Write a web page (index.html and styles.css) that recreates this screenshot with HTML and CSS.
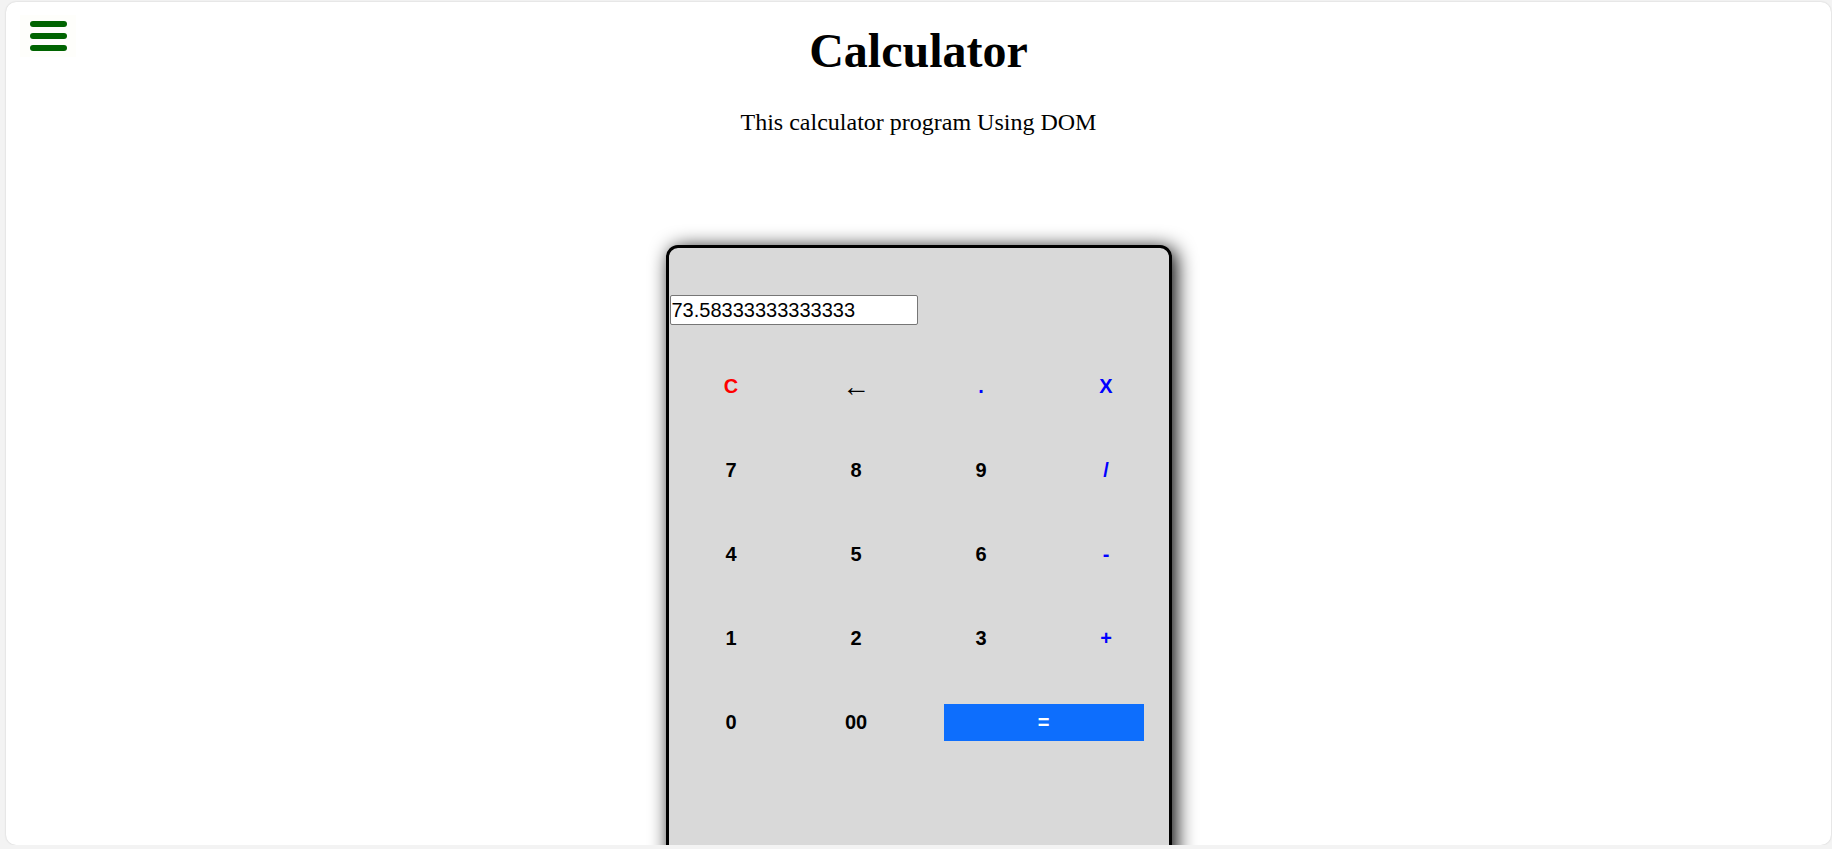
FILE: index.html
```html
<!DOCTYPE html>
<html lang="en">
<head>
<meta charset="utf-8">
<title>Calculator</title>
<link rel="stylesheet" href="styles.css">
</head>
<body>
<div class="panel">
  <button class="menu" aria-label="menu">
    <svg width="37" height="30" viewBox="0 0 37 30">
      <line x1="3" y1="3" x2="34" y2="3" />
      <line x1="3" y1="15" x2="34" y2="15" />
      <line x1="3" y1="27" x2="34" y2="27" />
    </svg>
  </button>
  <h1 class="title">Calculator</h1>
  <p class="subtitle">This calculator program Using DOM</p>
  <div class="calc">
    <input class="display" type="text" value="73.58333333333333">
    <div class="keys">
      <button class="key clear">C</button>
      <button class="key back">&larr;</button>
      <button class="key op">.</button>
      <button class="key op">X</button>
      <button class="key">7</button>
      <button class="key">8</button>
      <button class="key">9</button>
      <button class="key op">/</button>
      <button class="key">4</button>
      <button class="key">5</button>
      <button class="key">6</button>
      <button class="key op">-</button>
      <button class="key">1</button>
      <button class="key">2</button>
      <button class="key">3</button>
      <button class="key op">+</button>
      <button class="key">0</button>
      <button class="key">00</button>
      <button class="key equals">=</button>
    </div>
  </div>
</div>
</body>
</html>
```

FILE: styles.css
```css
html, body {
  margin: 0;
  padding: 0;
}

body {
  background: #f3f3f3;
  font-family: "Liberation Serif", "Times New Roman", serif;
}

.panel {
  position: relative;
  box-sizing: border-box;
  width: 1825px;
  height: 843px;
  margin: 2px 0 0 6px;
  background: #ffffff;
  border-radius: 10px;
  box-shadow: 0 0 2px rgba(0, 0, 0, 0.18);
  overflow: hidden;
  display: flex;
  flex-direction: column;
  align-items: center;
}

.menu {
  position: absolute;
  left: 14px;
  top: 13px;
  width: 56px;
  height: 42px;
  padding: 0;
  border: none;
  background: #fefefb;
  display: flex;
  align-items: center;
  justify-content: center;
  cursor: pointer;
}

.menu svg line {
  stroke: #006400;
  stroke-width: 6;
  stroke-linecap: round;
}

.title {
  margin: 21px 0 0;
  font-size: 48px;
  line-height: 55px;
  font-weight: bold;
  color: #000;
}

.subtitle {
  margin: 30px 0 0;
  font-size: 24px;
  line-height: 28px;
  color: #000;
}

.calc {
  flex: none;
  margin-top: 109px;
  width: 500px;
  height: 640px;
  background: #d9d9d9;
  border: 3px solid #000;
  border-radius: 12px;
  box-shadow: 4px 3px 20px #000;
  display: flex;
  flex-direction: column;
  align-items: flex-start;
}

.display {
  box-sizing: border-box;
  margin: 47px 0 0 1px;
  width: 248px;
  height: 30px;
  padding: 1px 1px;
  border: 1px solid #767676;
  border-radius: 2px;
  background: #fff;
  font-family: "Liberation Sans", Arial, sans-serif;
  font-size: 20px;
  color: #000;
}

.keys {
  align-self: stretch;
  margin-top: 43px;
  padding: 0 25px;
  display: grid;
  grid-template-columns: repeat(4, 75px);
  grid-auto-rows: 37px;
  column-gap: 50px;
  row-gap: 47px;
}

.key {
  padding: 0;
  border: none;
  background: transparent;
  font-family: "Liberation Sans", Arial, sans-serif;
  font-size: 20px;
  font-weight: bold;
  color: #000;
  cursor: pointer;
}

.key.clear {
  color: #ff0000;
}

.key.op {
  color: #0000ff;
}

.key.back {
  font-family: "Liberation Serif", "Times New Roman", serif;
  font-weight: normal;
  font-size: 28px;
  line-height: 37px;
}

.key.equals {
  grid-column: span 2;
  background: #0d6efd;
  color: #fff;
}
```
